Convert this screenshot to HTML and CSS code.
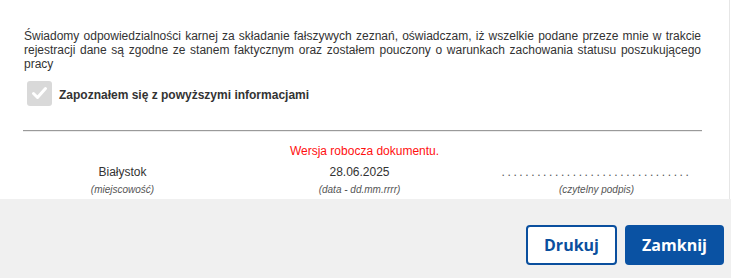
FILE: index.html
```html
<!DOCTYPE html>
<html lang="pl">
<head>
    <meta charset="UTF-8">
    <meta name="viewport" content="width=device-width, initial-scale=1.0">
    <title>Oświadczenie</title>
    <link rel="stylesheet" href="styles.css">
</head>
<body>

    <div class="content">
        <!-- Oświadczenie -->
        <p class="declaration">Świadomy odpowiedzialności karnej za składanie fałszywych zeznań, oświadczam, iż wszelkie podane przeze mnie w trakcie rejestracji dane są zgodne ze stanem faktycznym oraz zostałem pouczony o warunkach zachowania statusu poszukującego pracy</p>

        <div class="confirm">
            <span class="checkbox">
                <svg width="25" height="25" viewBox="0 0 25 25">
                    <polyline points="6.5,12.5 10.5,16.5 18.5,7.5" fill="none" stroke="#fff" stroke-width="3" stroke-linecap="round" stroke-linejoin="round"/>
                </svg>
            </span>
            <span class="confirm-label">Zapoznałem się z powyższymi informacjami</span>
        </div>

        <hr class="divider">

        <p class="draft">Wersja robocza dokumentu.</p>

        <!-- Podpisy -->
        <div class="signatures">
            <div class="sign-cell">
                <span class="sign-value">Białystok</span>
                <span class="sign-caption">(miejscowość)</span>
            </div>
            <div class="sign-cell">
                <span class="sign-value">28.06.2025</span>
                <span class="sign-caption">(data - dd.mm.rrrr)</span>
            </div>
            <div class="sign-cell">
                <span class="sign-value dots">................................</span>
                <span class="sign-caption">(czytelny podpis)</span>
            </div>
        </div>
    </div>

    <div class="footer">
        <button type="button" class="btn btn-outline">Drukuj</button>
        <button type="button" class="btn btn-primary">Zamknij</button>
    </div>

</body>
</html>
```

FILE: styles.css
```css
body {
    margin: 0;
    font-family: "Liberation Sans", Arial, sans-serif;
    font-size: 12px;
    color: #333;
    background-color: #fff;
}

.content {
    height: 199px;
    box-sizing: border-box;
    margin-right: 1px;
    border-right: 1px solid #e6e6e6;
    padding-top: 29px;
    overflow: hidden;
}

.declaration {
    margin: 0;
    padding: 0 28px 0 24px;
    line-height: 14px;
    text-align: justify;
}

.confirm {
    display: flex;
    align-items: center;
    gap: 7px;
    margin: 10px 0 0 27px;
}

.checkbox {
    display: block;
    width: 25px;
    height: 25px;
    background-color: #d9d9d9;
    border-radius: 3px;
}

.checkbox svg {
    display: block;
}

.confirm-label {
    font-weight: bold;
    padding-top: 3px;
}

.divider {
    margin: 24px 27px 0 23px;
    border: none;
    border-top: 1px solid #9a9a9a;
    border-bottom: 1px solid #ececec;
}

.draft {
    margin: 12px 0 0;
    line-height: 14px;
    text-align: center;
    color: #ff1010;
}

.signatures {
    display: grid;
    grid-template-columns: repeat(3, 237px);
    padding-left: 4px;
    margin-top: 7px;
}

.sign-cell {
    display: flex;
    flex-direction: column;
    align-items: center;
}

.sign-value {
    line-height: 14px;
    height: 14px;
}

.dots {
    letter-spacing: 2.6px;
    line-height: 14px;
    color: #555;
}

.sign-caption {
    margin-top: 5px;
    font-size: 10px;
    font-style: italic;
    line-height: 12px;
    color: #555;
}

.footer {
    height: 79px;
    box-sizing: border-box;
    background-color: #f0f0f0;
    display: flex;
    justify-content: flex-end;
    gap: 8px;
    padding: 26px 7px 0 0;
}

.btn {
    height: 40px;
    box-sizing: border-box;
    border-radius: 4px;
    font-family: "Open Sans", sans-serif;
    font-size: 16px;
    font-weight: bold;
    cursor: pointer;
}

.btn-outline {
    width: 91px;
    background-color: #fff;
    color: #0a4f9e;
    border: 2px solid #0a4f9e;
}

.btn-primary {
    width: 99px;
    background-color: #0a52a3;
    color: #fff;
    border: none;
}

.btn-primary:hover {
    background-color: #083f7e;
}
```
